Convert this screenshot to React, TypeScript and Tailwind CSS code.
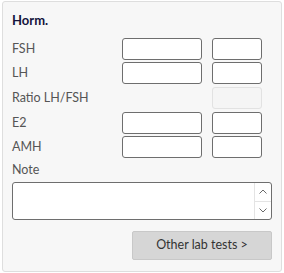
import React from "react";

const font = { fontFamily: '"Segoe UI", Lato, "Noto Sans", sans-serif' };

function Field({ wide, disabled }: { wide?: boolean; disabled?: boolean }) {
  return (
    <div
      className={`h-[22px] rounded-[3px] border ${wide ? "w-[80px]" : "w-[50px]"} ${
        disabled ? "border-[#e2e2e2] bg-[#f5f5f5]" : "border-[#6e6e6e] bg-white"
      }`}
    />
  );
}

function Row({ label, first = true, mt }: { label: string; first?: boolean; mt: string }) {
  return (
    <div className={`flex h-[22px] items-center ${mt}`}>
      <span className="flex-1 text-[12.5px] leading-4 text-[#555]">{label}</span>
      {first ? <Field wide /> : <div className="w-[80px]" />}
      <div className="ml-[10px] mr-[10px]">
        <Field disabled={!first} />
      </div>
    </div>
  );
}

export default function App() {
  return (
    <div className="h-[273px] w-[284px] bg-white pl-[2px] pt-[1px]" style={font}>
      <div className="flex h-[271px] w-[280px] flex-col rounded-[3px] border border-[#dedede] bg-[#f7f7f7] px-[9px] pt-[10px]">
        <div className="text-[13px] font-bold leading-4 text-[#14143c]">Horm.</div>
        <Row label="FSH" mt="mt-[10px]" />
        <Row label="LH" mt="mt-[2px]" />
        <Row label="Ratio LH/FSH" first={false} mt="mt-[3px]" />
        <Row label="E2" mt="mt-[3px]" />
        <Row label="AMH" mt="mt-[2px]" />
        <div className="mt-[4px] text-[12.5px] leading-4 text-[#555]">Note</div>
        <div className="mt-[4px] flex h-[38px] rounded-[3px] border border-[#6e6e6e] bg-white">
          <div className="flex-1" />
          <div className="flex w-[17px] flex-col border-l border-[#e4e4e4]">
            <div className="flex flex-1 items-center justify-center border-b border-[#e4e4e4]">
              <svg width="8" height="5" viewBox="0 0 8 5" fill="none" stroke="#6a6a6a" strokeWidth="1">
                <path d="M0.5 4.5 L4 1 L7.5 4.5" />
              </svg>
            </div>
            <div className="flex flex-1 items-center justify-center">
              <svg width="8" height="5" viewBox="0 0 8 5" fill="none" stroke="#6a6a6a" strokeWidth="1">
                <path d="M0.5 0.5 L4 4 L7.5 0.5" />
              </svg>
            </div>
          </div>
        </div>
        <div className="mt-[11px] flex justify-end">
          <button className="h-[29px] w-[140px] rounded-[2px] border border-[#c8c8c8] bg-[#d6d6d6] text-[12.5px] text-[#333]">
            Other lab tests &gt;
          </button>
        </div>
      </div>
    </div>
  );
}
